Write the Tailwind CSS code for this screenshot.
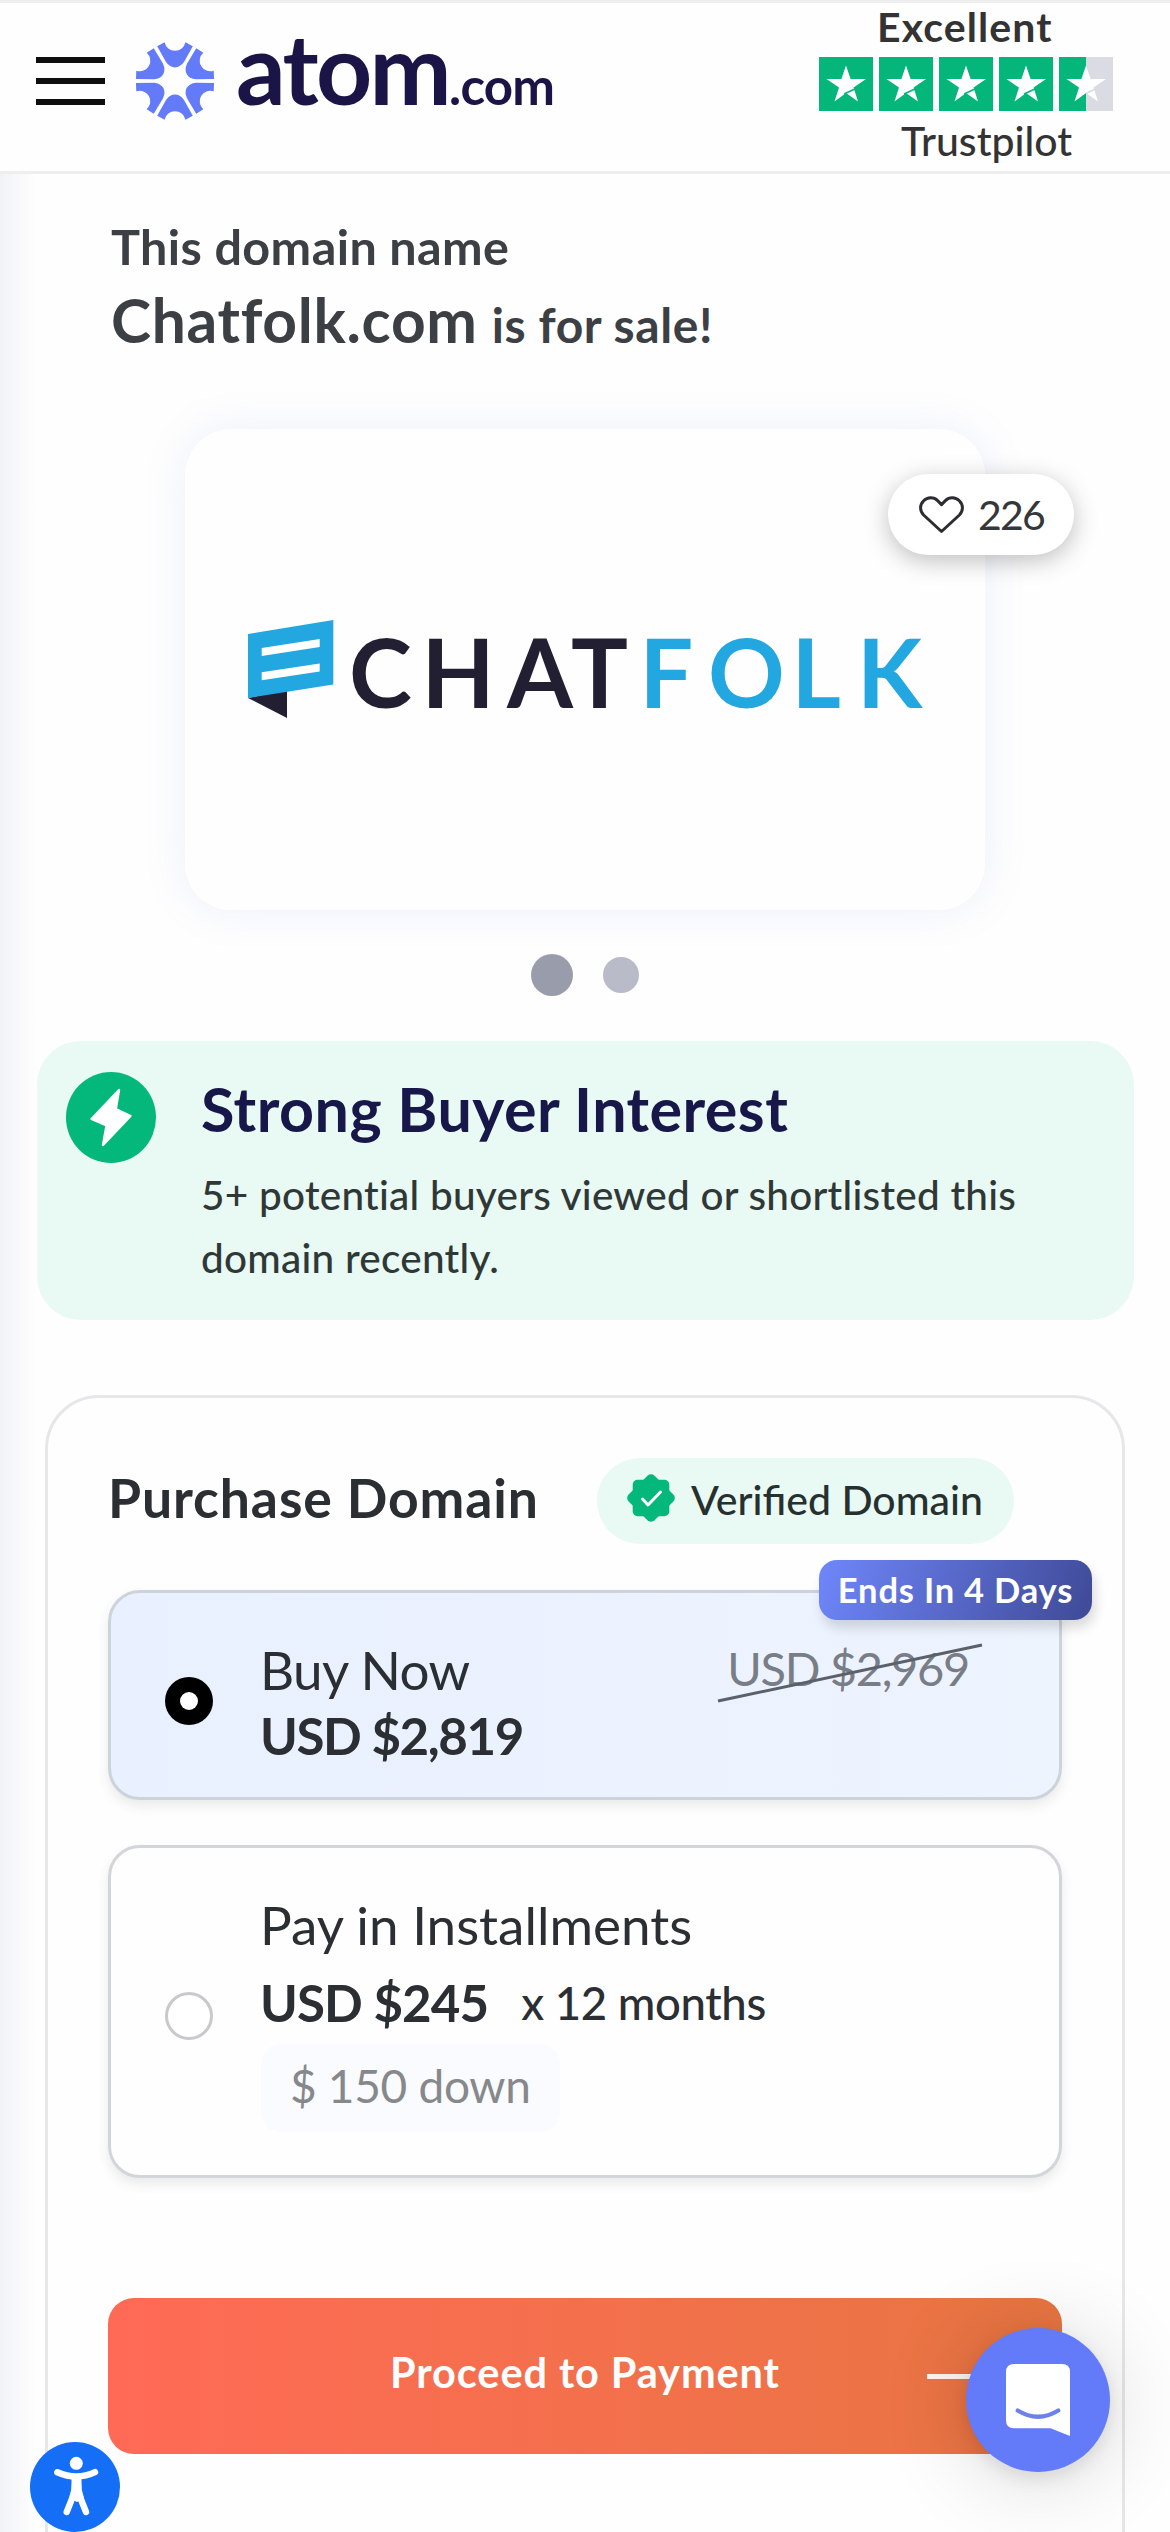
<!DOCTYPE html>
<html lang="en">
<head>
<meta charset="utf-8">
<title>Chatfolk.com is for sale | Atom</title>
<script src="https://cdn.jsdelivr.net/npm/@tailwindcss/browser@4"></script>
</head>
<body class="relative h-[2532px] w-[1170px] overflow-hidden bg-[#fefefe] font-['Lato','Open_Sans',sans-serif] whitespace-nowrap">

<svg class="hidden">
  <symbol id="star" viewBox="0 0 54 54">
    <path fill="#fff" d="M27 8.5 31.6 22H47L34.6 30.6 39 44.5 27 36 15.5 44.5 20 30.6 7.5 22H22.4Z"/>
  </symbol>
</svg>

<!-- Header -->
<header class="flex h-[174px] items-start justify-between border-y-[3px] border-[#eeeeef] pl-9">
  <div class="flex items-start">
    <div class="mt-[54px] flex h-12 w-[69px] flex-col justify-between">
      <span class="h-1.5 bg-[#0e0e0e]"></span><span class="h-1.5 bg-[#0e0e0e]"></span><span class="h-1.5 bg-[#0e0e0e]"></span>
    </div>
    <svg class="mt-[38px] ml-[29px] h-[80px] w-[82px]" viewBox="-41 -40 82 80" fill="#637bf8">
      <defs><path id="petal" d="M-17.8-34.8-10.4-38.7A10.6 10.6 0 0 0 10.4-38.7L17.8-34.8 9-19Q5-13.6 0-13.6-5-13.6-9-19Z"/></defs>
      <use href="#petal"/><use href="#petal" transform="rotate(60)"/><use href="#petal" transform="rotate(120)"/><use href="#petal" transform="rotate(180)"/><use href="#petal" transform="rotate(240)"/><use href="#petal" transform="rotate(300)"/>
    </svg>
    <div class="mt-[15px] ml-[20px] text-[98px] leading-none font-bold tracking-[-2.6px] text-[#1b1446]">atom<span class="text-[51px] tracking-[-0.8px]">.com</span></div>
  </div>
  <div class="mr-[57px] w-[294px] text-[41px] leading-none text-[#333]">
    <div class="mt-[3px] ml-[58px] font-bold tracking-[1.1px]">Excellent</div>
    <div class="mt-[10px] flex gap-1.5">
      <span class="h-[54px] w-[54px] bg-[#04b67a]"><svg class="h-full w-full"><use href="#star"/><path d="M25 37 37 31.5" stroke="#04b67a" stroke-width="1.6"/></svg></span>
      <span class="h-[54px] w-[54px] bg-[#04b67a]"><svg class="h-full w-full"><use href="#star"/><path d="M25 37 37 31.5" stroke="#04b67a" stroke-width="1.6"/></svg></span>
      <span class="h-[54px] w-[54px] bg-[#04b67a]"><svg class="h-full w-full"><use href="#star"/><path d="M25 37 37 31.5" stroke="#04b67a" stroke-width="1.6"/></svg></span>
      <span class="h-[54px] w-[54px] bg-[#04b67a]"><svg class="h-full w-full"><use href="#star"/><path d="M25 37 37 31.5" stroke="#04b67a" stroke-width="1.6"/></svg></span>
      <span class="h-[54px] w-[54px] bg-linear-to-r from-[#04b67a] from-50% to-[#dadbe3] to-50%"><svg class="h-full w-full"><use href="#star"/><path d="M27 36.5 37 31.5" stroke="#dadbe3" stroke-width="1.6"/></svg></span>
    </div>
    <div class="mt-[9px] ml-[82px] font-medium">Trustpilot</div>
  </div>
</header>

<!-- Edge shadow of the off-canvas panel -->
<div class="absolute top-[174px] left-0 h-[2358px] w-9 bg-linear-to-r from-[#f1f3f7] to-[#f1f3f7]/0"></div>

<main class="relative pt-12">
  <h1 class="pl-[111px] font-bold text-[#3c3f44]">
    <span class="block h-12 text-[48.5px] leading-none tracking-[0.4px]">This domain name</span>
    <span class="mt-5 block h-[59px] text-[60.5px] leading-[59px] tracking-[0.7px]">Chatfolk.com<span class="ml-[14px] text-[48px] tracking-[0.6px]">is for sale!</span></span>
  </h1>

  <!-- Domain logo card -->
  <section class="relative mt-20 ml-[185px] h-[481px] w-[800px] rounded-[46px] bg-[#fefefe] shadow-[0_0_44px_rgba(110,140,230,0.12)]">
    <svg class="h-full w-full" viewBox="185 429 800 481">
      <path fill="#231f33" d="M248 698 287 690V718Z"/>
      <path fill="#22a7e0" d="M248 634 333.3 620V684.5L248 698Z"/>
      <path fill="#fff" d="M261.7 648 319.7 639V647L261.7 656ZM261.7 672.2 319.7 663.4V671.4L261.7 680.3Z"/>
      <g class="font-['Lato'] text-[95px] font-bold">
        <text fill="#231f33" x="349 421.5 507 571" y="707.5">CHAT</text>
        <text fill="#22a7e0" x="639.5 708 791.5 857" y="707.5">FOLK</text>
      </g>
    </svg>
    <div class="absolute top-[45px] left-[703px] flex h-[81px] w-[186px] items-center rounded-full bg-white pl-[31px] shadow-[0_6px_24px_rgba(0,0,0,0.25)]">
      <svg class="h-[38px] w-[45px]" viewBox="0 0 45 38" fill="none" stroke="#2b2d30" stroke-width="3" stroke-linejoin="round"><path d="M22.5 35.5 4.6 19C.6 15 .6 8.6 4.6 4.8 8.6.8 14.8.8 18.6 4.6L22.5 8.6 26.4 4.6C30.2.8 36.4.8 40.4 4.8 44.4 8.6 44.4 15 40.4 19Z"/></svg>
      <span class="ml-[14px] text-[41px] leading-none tracking-[-1.8px] text-[#35373b]">226</span>
    </div>
  </section>

  <div class="mt-11 ml-[531px] flex h-[42px] items-center gap-[30px]">
    <span class="h-[42px] w-[42px] rounded-full bg-[#999caa]"></span><span class="h-9 w-9 rounded-full bg-[#b9bcc8]"></span>
  </div>

  <!-- Buyer interest banner -->
  <section class="mt-[45px] ml-[37px] flex h-[279px] w-[1097px] items-start rounded-[44px] bg-[#e9f9f3] pl-[29px]">
    <svg class="mt-[31px] h-[91px] w-[90px]" viewBox="66 1072 90 91"><ellipse cx="111" cy="1117.5" rx="45" ry="45.5" fill="#04b87c"/><path d="M119 1090 91.5 1119 106.5 1125.5 103 1145 130.5 1116 115.8 1109Z" fill="#fff" stroke="#fff" stroke-width="2.4" stroke-linejoin="round"/></svg>
    <div class="ml-[45px] pt-[38px]">
      <h2 class="h-[60px] text-[61px] leading-[60px] font-bold tracking-[0.45px] text-[#17174a]">Strong Buyer Interest</h2>
      <p class="mt-6 text-[40.5px] leading-[63px] font-medium tracking-[0.25px] text-[#2f3836]">5+ potential buyers viewed or shortlisted this<br>domain recently.</p>
    </div>
  </section>

  <!-- Purchase card -->
  <section class="mt-[75px] ml-[45px] h-[1200px] w-[1080px] rounded-[54px] border-[3px] border-[#e6e7e8] px-[60px] pt-[60px] text-[#2b2e33]">
    <div class="flex items-start justify-between pr-12">
      <h2 class="mt-[13px] text-[53.5px] leading-none font-bold tracking-[0.9px]">Purchase Domain</h2>
      <div class="flex h-[86px] w-[417px] items-center rounded-full bg-[#e9f9f3] pl-[30px]">
        <svg class="-mt-1.5 h-12 w-12" viewBox="-24 -24 48 48"><g fill="#04b87c"><rect x="-18.3" y="-18.3" width="36.6" height="36.6" rx="5"/><rect x="-18.3" y="-18.3" width="36.6" height="36.6" rx="5" transform="rotate(45)"/></g><path d="M-8.5 1-3 7 9.5-6" fill="none" stroke="#fff" stroke-width="3" stroke-linecap="round" stroke-linejoin="round"/></svg>
        <span class="-mt-1 ml-4 text-[41px] leading-none font-medium text-[#26302f]">Verified Domain</span>
      </div>
    </div>

    <div class="relative mt-[46px] flex h-[210px] items-start rounded-[32px] border-[3px] border-[#cdd3db] bg-linear-to-r from-[#e9f0ff] to-[#eef4fe] pl-[54px] shadow-[0_6px_12px_rgba(40,60,50,0.10)]">
      <span class="mt-[84px] flex h-12 w-12 items-center justify-center rounded-full bg-black"><span class="h-[18px] w-[18px] rounded-full bg-white"></span></span>
      <div class="ml-[47px] pt-[50px] leading-none">
        <div class="h-[53px] text-[53px] leading-none tracking-[-0.6px]">Buy Now</div>
        <div class="mt-[14px] text-[51px] leading-none font-bold tracking-[-1.4px]">USD $2,819</div>
      </div>
      <div class="relative mt-[52px] mr-[90px] ml-auto text-[47px] leading-none tracking-[-1.3px] text-[#787d87]">USD $2,969
        <svg class="absolute -top-1 -left-[10px] h-[64px] w-[268px]" viewBox="0 0 268 64"><path d="M1 60 265 4" stroke="#5b616b" stroke-width="3"/></svg>
      </div>
      <div class="absolute -top-[33px] -right-[33px] flex h-[60px] w-[273px] items-center justify-center rounded-[18px] bg-linear-110 from-[#6f87fb] to-[#3f4a97] text-[34.5px] leading-none font-bold tracking-[0.8px] text-white shadow-[3px_8px_12px_rgba(0,0,0,0.14)]">Ends In 4 Days</div>
    </div>

    <div class="mt-[45px] flex h-[333px] items-start rounded-[32px] border-[3px] border-[#d2d5d9] bg-[#fefefe] pl-[54px] shadow-[0_6px_12px_rgba(40,60,50,0.10)]">
      <span class="mt-[144px] h-12 w-12 rounded-full border-[3px] border-[#c8c9ca] bg-white"></span>
      <div class="ml-[47px] pt-[50px]">
        <div class="h-[53px] text-[53px] leading-none">Pay in Installments</div>
        <div class="mt-[26px] flex h-[51px] items-baseline text-[51px] leading-none"><span class="font-bold tracking-[-0.9px]">USD $245</span><span class="relative -top-0.5 ml-[33px] text-[45.5px] font-medium tracking-[-0.4px]">x 12 months</span></div>
        <div class="mt-[16px] ml-px flex h-[88px] w-[299px] items-center rounded-[20px] bg-[#fafbfe] pb-[5px] pl-[29px] text-[46px] leading-none tracking-[-0.3px] text-[#86888b]">$ 150 down</div>
      </div>
    </div>

    <div class="relative mt-[120px] flex h-[156px] items-center justify-center rounded-[26px] bg-linear-to-r from-[#ff6a56] to-[#e87541] pb-[7px] text-[41.5px] leading-none font-bold tracking-[0.9px] text-white">Proceed to Payment
      <span class="absolute top-[76px] left-[819px] h-[5px] w-[60px] bg-[#fff5ee]"></span>
    </div>
  </section>
</main>

<!-- Floating buttons -->
<svg class="absolute top-[2442px] left-[30px] h-[90px] w-[90px]" viewBox="30 2442 90 90"><circle cx="75" cy="2487" r="45" fill="#146ff6"/><g fill="#fff"><circle cx="76.3" cy="2463.3" r="6.5"/><path d="M71.5 2478H81.5V2482Q81 2490 84 2498L77 2502 69 2498Q72 2490 71.5 2482Z"/></g><g fill="none" stroke="#fff" stroke-width="6.4" stroke-linecap="round" stroke-linejoin="round"><path d="M57.3 2472.2Q67 2476.5 76.3 2476.5 86 2476.5 95 2472.2"/><path d="M66.7 2512 73.5 2495M86 2512 79.3 2495"/></g></svg>
<div class="absolute top-[2328px] left-[966px] h-36 w-36 rounded-full bg-[#637bf8] shadow-[0_6px_18px_rgba(0,0,0,0.10),0_6px_90px_rgba(0,0,0,0.16)]">
  <svg class="h-full w-full" viewBox="966 2328 144 144"><path fill="#fff" d="M1014 2364H1062Q1070 2364 1070 2372V2436L1050.5 2428.3H1014Q1006 2428.3 1006 2420.3V2372Q1006 2364 1014 2364Z"/><path d="M1017.7 2410.5Q1038 2423 1058.3 2410.5" fill="none" stroke="#6a82ea" stroke-width="4.2" stroke-linecap="round"/></svg>
</div>
</body>
</html>
